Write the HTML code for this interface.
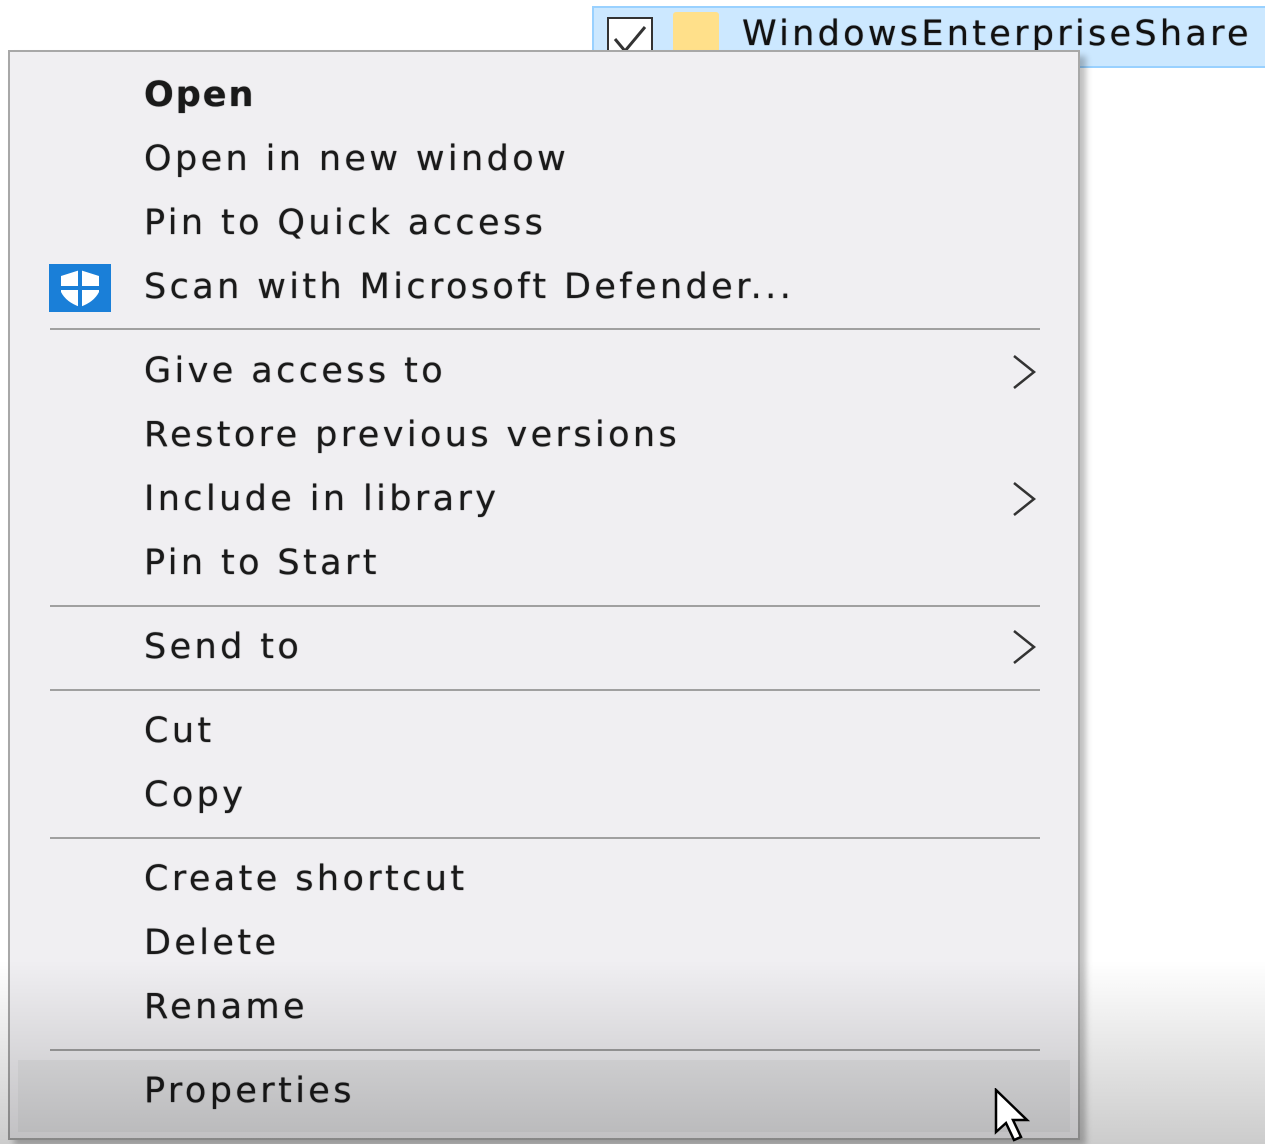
<!DOCTYPE html>
<html><head><meta charset="utf-8"><style>
html,body{margin:0;padding:0;width:1265px;height:1144px;overflow:hidden;background:#fff;position:relative;font-family:"DejaVu Sans","Liberation Sans",sans-serif;}
.sel{position:absolute;left:592px;top:6px;width:680px;height:62px;background:#cce8ff;border:2px solid #99d1ff;box-sizing:border-box}
.cb{position:absolute;left:607px;top:17px;width:46px;height:46px;border:2px solid #333;background:#fff;box-sizing:border-box}
.fold{position:absolute;left:673px;top:12px;width:46px;height:50px;background:#ffe08a;border-radius:3px}
.fname{position:absolute;left:742px;top:14px;font-size:35px;letter-spacing:3.3px;color:#111;text-shadow:0 0 1px #333}
.menu{position:absolute;left:8px;top:50px;width:1072px;height:1090px;background:#f0eff2;border:2px solid #a8a8a8;box-sizing:border-box;box-shadow:6px 6px 6px rgba(0,0,0,.25)}
.it{position:absolute;left:144px;font-size:35px;letter-spacing:3.4px;color:#1a1a1a;line-height:40px;text-shadow:0 0 1px #444}
.sep{position:absolute;left:50px;width:990px;height:2px;background:#a0a0a0}
.chev{position:absolute;left:1008px;width:30px;height:40px}
.hl{position:absolute;left:18px;top:1060px;width:1052px;height:72px;background:#e6e6e8}
.shade{position:absolute;left:0;top:960px;width:1265px;height:184px;background:linear-gradient(rgba(0,0,0,0),rgba(0,0,0,.2));pointer-events:none}
</style></head><body>
<div class="sel"></div><div class="cb"><svg width="42" height="42" viewBox="0 0 42 42"><path d="M6 20 L16 32 L36 8" stroke="#333" stroke-width="3" fill="none"/></svg></div>
<div class="fold"></div>
<div class="fname">WindowsEnterpriseShare</div>
<div class="menu"></div>
<div class="hl"></div>
<div class="it" style="top:75px;font-weight:bold;letter-spacing:2px">Open</div>
<div class="it" style="top:139px">Open in new window</div>
<div class="it" style="top:203px">Pin to Quick access</div>
<svg style="position:absolute;left:49px;top:264px" width="62" height="48" viewBox="0 0 62 48"><rect width="62" height="48" fill="#1a7fd8"/><path d="M31 6 L50 12 L50 28 Q45 38 31 43 Q17 38 12 28 L12 12 Z" fill="#fff"/><path d="M31 5 V44 M10 24 H52" stroke="#1a7fd8" stroke-width="4"/></svg>
<div class="it" style="top:267px">Scan with Microsoft Defender...</div>
<div class="sep" style="top:328px"></div>
<div class="it" style="top:351px">Give access to</div>
<div class="it" style="top:415px">Restore previous versions</div>
<div class="it" style="top:479px">Include in library</div>
<div class="it" style="top:543px">Pin to Start</div>
<div class="sep" style="top:605px"></div>
<div class="it" style="top:627px">Send to</div>
<div class="sep" style="top:689px"></div>
<div class="it" style="top:711px">Cut</div>
<div class="it" style="top:775px">Copy</div>
<div class="sep" style="top:837px"></div>
<div class="it" style="top:859px">Create shortcut</div>
<div class="it" style="top:923px">Delete</div>
<div class="it" style="top:987px">Rename</div>
<div class="sep" style="top:1049px"></div>
<div class="it" style="top:1071px">Properties</div>
<svg class="chev" style="top:352px" viewBox="0 0 30 40"><path d="M6 4 L26 20 L6 36" stroke="#333" stroke-width="2.5" fill="none"/></svg>
<svg class="chev" style="top:479px" viewBox="0 0 30 40"><path d="M6 4 L26 20 L6 36" stroke="#333" stroke-width="2.5" fill="none"/></svg>
<svg class="chev" style="top:627px" viewBox="0 0 30 40"><path d="M6 4 L26 20 L6 36" stroke="#333" stroke-width="2.5" fill="none"/></svg>
<div class="shade"></div>
<svg style="position:absolute;left:993px;top:1088px" width="50" height="56" viewBox="0 0 50 56"><path d="M3 2 L3 44 L13 35 L21 52 L28 49 L20 32 L34 32 Z" fill="#fff" stroke="#000" stroke-width="2.5"/></svg>
</body></html>
